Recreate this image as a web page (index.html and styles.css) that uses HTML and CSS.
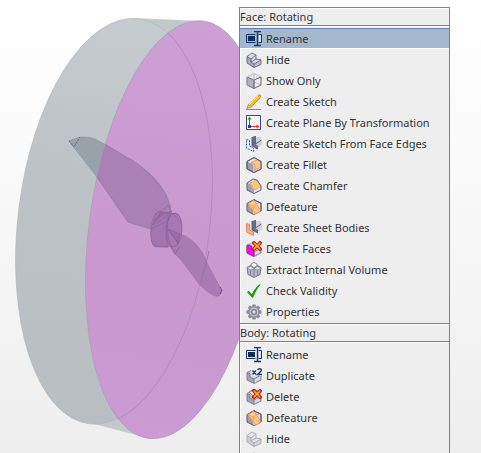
FILE: index.html
```html
<!DOCTYPE html>
<html lang="en">
<head>
<meta charset="utf-8">
<title>Rotating</title>
<link rel="stylesheet" href="styles.css">
</head>
<body>
<svg class="defs" aria-hidden="true">
  <defs>
    <symbol id="i-rename" viewBox="0 0 16 16">
      <path d="M9.500 3.500H.5v8h9" fill="none" stroke="#173567"/>
      <path d="M2 5h7v5H2z" fill="#0b2c63"/>
      <path d="M12.500 3.500h3v8h-3" fill="#dce6f2" stroke="#173567"/>
      <path d="M8 .5h7M8 14.500h7M11.500 1v14" fill="none" stroke="#173567" stroke-width="1.400"/>
    </symbol>
    <symbol id="i-hide" viewBox="0 0 16 16">
      <path d="M1 4.500 6 1l4 2v4l5-1v6l-7 3.500L1 11z" fill="#dcdce6"/>
      <path d="M1 4.500 5 7v3l3 2v3.500L1 11z" fill="#a9a9bb"/>
      <path d="m8 12 7-4v4.500l-7 3z" fill="#bcbccb"/>
      <path d="M1 4.500 6 1l4 2v4l5 1v4.500l-7 3L1 11zM1 4.500 5 7l5-4M5 7v3l5-3M5 10l3 2 7-4M8 12v3.500" fill="none" stroke="#65657c" stroke-width=".9"/>
    </symbol>
    <symbol id="i-show" viewBox="0 0 16 16">
      <path d="m1 4 7 3v8.500L1 12z" fill="#b0b0c0" stroke="#73738a"/>
      <path d="m1 4 7-3.500L15 4v8l-7 3.500M8 7l7-3M8 .5V7m0 2 7 3M1 12l7-3" fill="none" stroke="#b9b9c0"/>
      <path d="M15 4v8l-7 3.500V7z" fill="none" stroke="#77777f"/>
    </symbol>
    <symbol id="i-sketch" viewBox="0 0 16 16">
      <path d="M0 15.500h15" stroke="#888"/>
      <path d="m1 14.500 1.500-4 2.500 2.500z" fill="#e9c79b" stroke="#765" stroke-width=".6"/>
      <path d="m2.500 10.500 9.500-9.500 2.500 2.500L5 13z" fill="#fbb81c"/>
      <path d="m3 11 9.500-9.500" stroke="#ffe16b"/>
      <path d="m5 13 9.500-9.500" stroke="#c87d0e" stroke-width=".8"/>
      <path d="m12 1 1.500-1L15.500 2l-1 1.500z" fill="#eb8a48"/>
    </symbol>
    <symbol id="i-plane" viewBox="0 0 16 16">
      <path d="M.5.5h14v14H.5z" fill="#f8f8fc" stroke="#3c4775"/>
      <path d="M3.500 12V4" stroke="#129a23"/>
      <path d="m3.500 1.500 2 3h-4z" fill="#129a23"/>
      <path d="M4 11.500h7" stroke="#e22"/>
      <path d="m13.500 11.500-3-2v4z" fill="#e22"/>
      <path d="M2 10h3v3H2z" fill="#123bd9"/>
    </symbol>
    <symbol id="i-solid" viewBox="0 0 16 16">
      <path d="M10 1h5v3l1 2v3l-6 4-3-3z" fill="#d0d0d6"/>
      <path d="m6 1 3-1v8l3 2v3l-6-3z" fill="#696d85"/>
      <path d="M6 1v9l6 3M9.500 0v8l6-4" fill="none" stroke="#555a73" stroke-width=".9"/>
    </symbol>
    <symbol id="i-edges" viewBox="0 0 16 16">
      <use href="#i-solid" width="16" height="16"/>
      <path d="m.5 3.500 3 1V10l4 2v3.500l-7-3.500z" fill="#e8ecff" stroke="#315ce5" stroke-dasharray="2 1"/>
    </symbol>
    <symbol id="i-sheet" viewBox="0 0 16 16">
      <use href="#i-solid" width="16" height="16"/>
      <path d="m.5 3.500 3 1V10l4 2v3.500l-7-3.500z" fill="#f8b184" stroke="#ee8250"/>
    </symbol>
    <symbol id="i-cube" viewBox="0 0 16 16">
      <path d="m1 4.500 7-4 7 4V12l-7 3.500L1 12z" fill="#e3e3e9"/>
      <path d="m1 4.500 6 3v8L1 12z" fill="#a1a1b2"/>
      <path d="m1 4.500 7-4 7 4V12l-7 3.500L1 12z" fill="none" stroke="#5d5d70"/>
    </symbol>
    <symbol id="i-fillet" viewBox="0 0 16 16">
      <use href="#i-cube" width="16" height="16"/>
      <path d="M7 15V9q0-3 3-4l5 1v6z" fill="#c6c6d1"/>
      <path d="m5 6 5-3q4 0 5 3v4l-6 3V9q0-3-4-3z" fill="#fdc97b" stroke="#ef955b" stroke-width=".8"/>
      <path d="m1 4.500 7-4 7 4V12l-7 3.500L1 12z" fill="none" stroke="#5d5d70"/>
    </symbol>
    <symbol id="i-chamfer" viewBox="0 0 16 16">
      <path d="m1 5 6-4 4 1 4 6v4l-7 3.500L1 12z" fill="#e7e7ec"/>
      <path d="m1 5 3 1 4 6v3.500L1 12z" fill="#a1a1b2"/>
      <path d="m4 5 6-3 5 6-6 4z" fill="#fdc97b" stroke="#ef955b" stroke-width=".8"/>
      <path d="m1 5 6-4 4 1 4 6v4l-7 3.500L1 12z" fill="none" stroke="#5d5d70"/>
    </symbol>
    <symbol id="i-defeature" viewBox="0 0 16 16">
      <use href="#i-cube" width="16" height="16"/>
      <path d="m2 5 6-4 7 11-5 3z" fill="#fdcf83" stroke="#f28e48" stroke-width=".9"/>
      <path d="m2 5 5 2v7M7 7l6-3M7 7l7 6" fill="none" stroke="#ef955b" stroke-width=".8"/>
      <path d="m8 1 7 3v8" fill="none" stroke="#5d5d70"/>
    </symbol>
    <symbol id="i-block" viewBox="0 0 16 16">
      <path d="m1 4.500 4-2 4 6 6-2V12l-7 3.500L1 12z" fill="#d8d8e0"/>
      <path d="m1 4.500 3 1V9l4 2v4.500L1 12z" fill="#a4a4b5"/>
      <path d="m1 4.500 4-2M4 5.500V9l4 2 7-4v5l-7 3.500L1 12V4.500l3 1M8 11v4" fill="none" stroke="#77778a" stroke-width=".9"/>
    </symbol>
    <symbol id="i-cross" viewBox="0 0 16 16">
      <path d="m8 2 6 6m0-6L8 8" stroke="#b01212" stroke-width="3.600" stroke-linecap="square"/>
      <path d="m8 2 6 6m0-6L8 8" stroke="#f02c1a" stroke-width="2.400" stroke-linecap="square"/>
      <path d="m8 2 6 6m0-6L8 8" stroke="#ffd03a" stroke-width="1.200"/>
    </symbol>
    <symbol id="i-delface" viewBox="0 0 16 16">
      <use href="#i-block" width="16" height="16"/>
      <path d="m1 4 5 1v4l2 2v4.500L1 12z" fill="#f0f" stroke="#a018a0" stroke-width=".8"/>
      <use href="#i-cross" width="16" height="16"/>
    </symbol>
    <symbol id="i-delete" viewBox="0 0 16 16">
      <use href="#i-block" width="16" height="16"/>
      <path d="m3 3 5-3 6 3v3L8 8z" fill="#e1e1e8" stroke="#77778a" stroke-width=".9"/>
      <use href="#i-cross" width="16" height="16"/>
    </symbol>
    <symbol id="i-duplicate" viewBox="0 0 16 16">
      <use href="#i-block" width="16" height="16"/>
      <path d="M6 0h10v8H6z" fill="#eee"/>
      <path d="m6.500 2.500 3.500 4m0-4-3.500 4M11.500 2q1-1.800 3-1t-.3 3L11.500 6.500H16" fill="none" stroke="#1b3b70" stroke-width="1.400"/>
    </symbol>
    <symbol id="i-volume" viewBox="0 0 16 16">
      <path d="M1 5.500 8 2l7 3.500-1 7-6 3-6-3z" fill="#b4b4c6" stroke="#77778c"/>
      <path d="m1 5.500 4-1 3 2 3-2 4 1-3 2.500-4-1-4 1z" fill="#e8e8f0" stroke="#84849a" stroke-width=".8"/>
      <path d="M8 7v8M4.500 8.500V13M11.500 8.500V13" stroke="#85859b"/>
      <path d="m5 2 3-1.500L11 2v2L8 5.500 5 4z" fill="#f8f8fb" stroke="#77778c" stroke-width=".9"/>
    </symbol>
    <symbol id="i-check" viewBox="0 0 16 16">
      <path d="m1.500 9 1.500-.5 3 3.500Q9 5 14 1.500 10 6 6.500 14.500z" fill="#12a912" stroke="#079d07"/>
    </symbol>
    <symbol id="i-gear" viewBox="0 0 16 16">
      <path d="M6.500.5h3l.5 2.200 2.200-1.200 2 2-1.200 2.300 2.500.7v3l-2.500.7 1.200 2.300-2 2-2.200-1.200-.5 2.200h-3L6 13.300l-2.200 1.200-2-2L3 10.200.5 9.500v-3L3 5.800 1.800 3.500l2-2L6 2.700z" fill="#8b8b9e"/>
      <circle cx="8" cy="8" r="3.900" fill="none" stroke="#c9c9d5" stroke-width="1.100"/>
      <circle cx="8" cy="8" r="2" fill="#eee" stroke="#77778d" stroke-width=".8"/>
    </symbol>
  </defs>
</svg>

<main class="viewport">
  <svg class="model" width="481" height="453" viewBox="0 0 481 453" role="img" aria-label="Propeller inside a rotating disc">
    <defs>
      <linearGradient id="shell" x1="0" y1="0" x2="0" y2="1">
        <stop offset="0" stop-color="#c5cbce"/><stop offset=".4" stop-color="#bdc2c6"/><stop offset="1" stop-color="#b8bec1"/>
      </linearGradient>
      <linearGradient id="face" x1="0" y1="0" x2="0" y2="1">
        <stop offset="0" stop-color="#cd9fd5"/><stop offset=".6" stop-color="#c898cf"/><stop offset="1" stop-color="#ca9cd3"/>
      </linearGradient>
      <clipPath id="face-clip"><ellipse cx="176" cy="229.700" rx="87" ry="210.500" transform="rotate(7.500 176 229.700)"/></clipPath>
    </defs>
    <path d="M134 18l65 3-47 418-62-16z" fill="#c2c9cb"/>
    <ellipse cx="114" cy="221.300" rx="96" ry="204" transform="rotate(6.900 114 221.300)" fill="url(#shell)" stroke="#b0b9be" stroke-width=".7"/>
    <ellipse cx="176" cy="229.700" rx="87" ry="210.500" transform="rotate(7.500 176 229.700)" fill="url(#face)" stroke="#ab9eb5" stroke-width=".7"/>
    <g clip-path="url(#face-clip)">
      <ellipse cx="114" cy="221.300" rx="96" ry="204" transform="rotate(6.900 114 221.300)" fill="none" stroke="#b78bc0"/>
    </g>
    <path d="M69 141Q82 134 95 139L106 145 135 162Q164 182 170 205L171 212 155 220 151 229 128 222 121 212 97 177z" fill="#9aa2a9" stroke="#858e98" stroke-width=".6"/>
    <g clip-path="url(#face-clip)">
      <path d="M69 141Q82 134 95 139L106 145 135 162Q164 182 170 205L171 212 155 220 151 229 128 222 121 212 97 177z" fill="#ab80b7" stroke="#9873a7" stroke-width=".6"/>
    </g>
    <path d="M69 141l5 6 6-10" fill="none" stroke="#58626d" stroke-width=".8" stroke-dasharray="2 1"/>
    <path d="M180 234Q192 237 202 252L209 267 222 291 219 296Q213 298 199 284L182 261 174 253 170 246z" fill="#a87bb3" stroke="#9570a2" stroke-width=".6"/>
    <path d="M209 251q-3 16-9 32" fill="none" stroke="#996fa5" stroke-width=".8"/>
    <ellipse cx="158" cy="229" rx="7" ry="18" fill="#a474ae" stroke="#84619a" stroke-width=".7" transform="rotate(7 158 229)"/>
    <path d="M160 212l16 1-8 35-11-1z" fill="#a474ae"/>
    <ellipse cx="174" cy="230" rx="8" ry="17" fill="#a878b3" stroke="#84619a" stroke-width=".7" transform="rotate(5 174 230)"/>
    <path d="M153 225q6-12 15-20l3 6-9 8zM168 229l12 5-2 9zM160 212l12 1 8 8M151 229l17-8 4-10M167 212v35M170 211q-6 18 1 36M168 229l11 15M170 244l5 10 5-8M157 247l15-1" fill="none" stroke="#84619a" stroke-width=".6"/>
    <path d="M153 223q5-12 15-11l-9 6z" fill="#895c96" opacity=".5"/>
    <path d="M168 229l12 5-2 10z" fill="#895c96" opacity=".4"/>
    <path d="M220 287l2 3-2 4" fill="none" stroke="#60407d" stroke-dasharray="2 1"/>
  </svg>

  <nav class="menu">
    <section class="group">
      <h2 class="title">Face: Rotating</h2>
      <ul class="items">
        <li><button class="item selected"><svg class="icon"><use href="#i-rename"/></svg>Rename</button></li>
        <li><button class="item"><svg class="icon"><use href="#i-hide"/></svg>Hide</button></li>
        <li><button class="item"><svg class="icon"><use href="#i-show"/></svg>Show Only</button></li>
        <li><button class="item"><svg class="icon"><use href="#i-sketch"/></svg>Create Sketch</button></li>
        <li><button class="item"><svg class="icon"><use href="#i-plane"/></svg>Create Plane By Transformation</button></li>
        <li><button class="item"><svg class="icon"><use href="#i-edges"/></svg>Create Sketch From Face Edges</button></li>
        <li><button class="item"><svg class="icon"><use href="#i-fillet"/></svg>Create Fillet</button></li>
        <li><button class="item"><svg class="icon"><use href="#i-chamfer"/></svg>Create Chamfer</button></li>
        <li><button class="item"><svg class="icon"><use href="#i-defeature"/></svg>Defeature</button></li>
        <li><button class="item"><svg class="icon"><use href="#i-sheet"/></svg>Create Sheet Bodies</button></li>
        <li><button class="item"><svg class="icon"><use href="#i-delface"/></svg>Delete Faces</button></li>
        <li><button class="item"><svg class="icon"><use href="#i-volume"/></svg>Extract Internal Volume</button></li>
        <li><button class="item"><svg class="icon"><use href="#i-check"/></svg>Check Validity</button></li>
        <li><button class="item"><svg class="icon"><use href="#i-gear"/></svg>Properties</button></li>
      </ul>
    </section>
    <section class="group">
      <h2 class="title">Body: Rotating</h2>
      <ul class="items">
        <li><button class="item"><svg class="icon"><use href="#i-rename"/></svg>Rename</button></li>
        <li><button class="item"><svg class="icon"><use href="#i-duplicate"/></svg>Duplicate</button></li>
        <li><button class="item"><svg class="icon"><use href="#i-delete"/></svg>Delete</button></li>
        <li><button class="item"><svg class="icon"><use href="#i-defeature"/></svg>Defeature</button></li>
        <li><button class="item"><svg class="icon dim"><use href="#i-hide"/></svg>Hide</button></li>
        <li><button class="item"><svg class="icon dim"><use href="#i-show"/></svg></button></li>
      </ul>
    </section>
  </nav>
</main>
</body>
</html>
```
FILE: styles.css
```css
* { box-sizing: border-box; }
body { margin: 0; font: 11px/16px "Noto Sans", sans-serif; color: #333; }
.defs { position: absolute; width: 0; height: 0; }
.viewport {
  position: relative;
  height: 100vh;
  overflow: hidden;
  background: linear-gradient(#fff, #fdfdfd 15%, #eee);
}
.model { display: block; }
.menu {
  position: absolute;
  left: 239px;
  top: 7px;
  min-width: 211px;
  border: 1px solid #6382bf;
  background: #eee;
}
.group + .group { border-top: 1px solid #6382bf; }
.title {
  margin: 0;
  height: 18px;
  border-bottom: 1px solid #6382bf;
  box-shadow: inset 0 1px #fff;
  font-size: 11px;
  font-weight: 400;
  line-height: 18px;
}
.items {
  list-style: none;
  margin: 0;
  padding: 2px 0 1px;
  box-shadow: inset 1px 1px #fff;
}
.item {
  display: flex;
  align-items: center;
  gap: 4px;
  width: 100%;
  height: 21px;
  padding: 0 15px 0 6px;
  border: 0;
  background: none;
  font: inherit;
  color: inherit;
  white-space: nowrap;
}
.selected {
  background: #a3b8cc;
  border-top: 1px solid #6382bf;
  border-bottom: 1px solid #fff;
}
.icon { width: 16px; height: 16px; flex: none; }
.dim { opacity: .5; }
```
